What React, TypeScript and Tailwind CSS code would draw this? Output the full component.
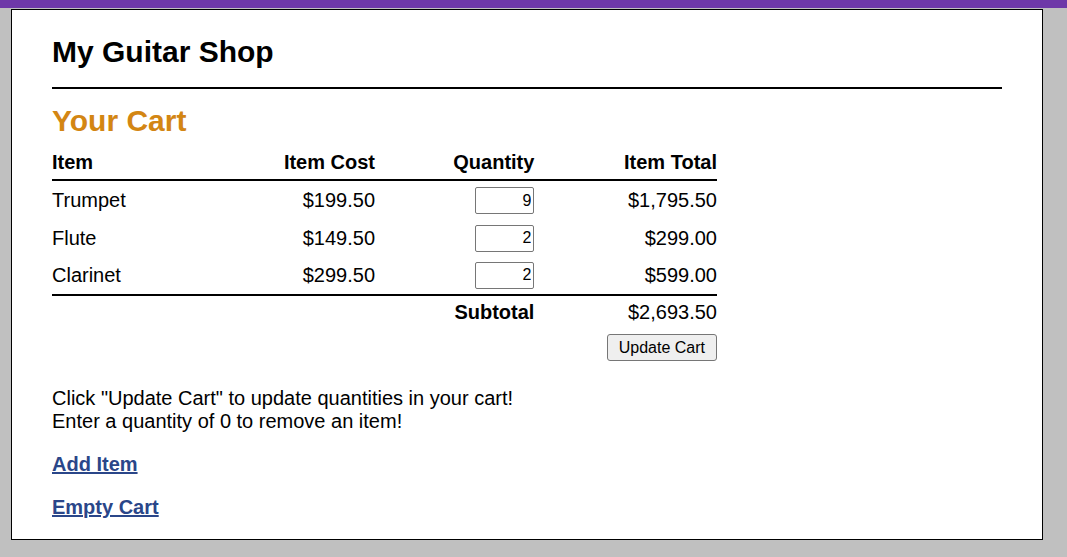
import { useState } from 'react'

type CartItem = {
  name: string
  cost: number
  qty: number
}

const money = (n: number) =>
  '$' + n.toLocaleString('en-US', { minimumFractionDigits: 2, maximumFractionDigits: 2 })

export default function App() {
  const [items] = useState<CartItem[]>([
    { name: 'Trumpet', cost: 199.5, qty: 9 },
    { name: 'Flute', cost: 149.5, qty: 2 },
    { name: 'Clarinet', cost: 299.5, qty: 2 },
  ])
  const subtotal = items.reduce((sum, item) => sum + item.cost * item.qty, 0)

  return (
    <div className="min-h-[557px] bg-[#c0c0c0] font-['Liberation_Sans',Arial,sans-serif] text-black">
      <div className="h-2 bg-[#6e38a8]" />
      <main className="ml-[11px] mt-px w-[1032px] border border-black bg-white px-10 pt-[25px] pb-5">
        <h1 className="text-[30px] font-bold leading-[34px]">My Guitar Shop</h1>
        <hr className="mt-[18px] border-0 border-t-2 border-black" />

        <h2 className="mt-[15px] text-[30px] font-bold leading-[34px] text-[#d38613]">
          Your Cart
        </h2>

        <div className="mt-[13px] w-[665px] text-[20px] leading-[23px]">
          <div className="grid grid-cols-[160px_163px_159.4px_182.6px] border-b-2 border-black pb-[5px] font-bold">
            <span>Item</span>
            <span className="text-right">Item Cost</span>
            <span className="text-right">Quantity</span>
            <span className="text-right">Item Total</span>
          </div>

          {items.map((item) => (
            <div
              key={item.name}
              className="grid h-[37.4px] grid-cols-[160px_163px_159.4px_182.6px] items-center pt-[2px]"
            >
              <span>{item.name}</span>
              <span className="text-right">{money(item.cost)}</span>
              <div className="flex justify-end">
                <input
                  type="text"
                  defaultValue={item.qty}
                  className="h-[27px] w-[59px] rounded-[2px] border border-[#767676] bg-white px-[2px] text-right text-[16px] outline-none"
                />
              </div>
              <span className="text-right">{money(item.cost * item.qty)}</span>
            </div>
          ))}

          <div className="mt-[1px] grid grid-cols-[160px_163px_159.4px_182.6px] border-t-2 border-black pt-[5px]">
            <span />
            <span />
            <span className="text-right font-bold">Subtotal</span>
            <span className="text-right">{money(subtotal)}</span>
          </div>

          <div className="mt-[10px] flex justify-end">
            <button className="h-[27px] rounded-[3px] border border-[#767676] bg-[#efefef] px-[11px] text-[16px] leading-[18px]">
              Update Cart
            </button>
          </div>
        </div>

        <p className="mt-[26px] text-[20px] leading-[23px]">
          Click "Update Cart" to update quantities in your cart!
          <br />
          Enter a quantity of 0 to remove an item!
        </p>

        <p className="mt-5 text-[20px] leading-[23px]">
          <a href="#" className="font-bold text-[#2a4689] underline">
            Add Item
          </a>
        </p>
        <p className="mt-5 text-[20px] leading-[23px]">
          <a href="#" className="font-bold text-[#2a4689] underline">
            Empty Cart
          </a>
        </p>
      </main>
    </div>
  )
}
